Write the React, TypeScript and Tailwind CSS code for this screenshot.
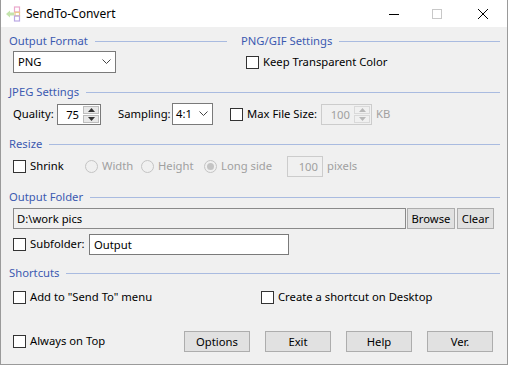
import React from 'react';

const font = { fontFamily: '"Noto Sans", "Liberation Sans", sans-serif' };

function Header({ label, className = '' }: { label: string; className?: string }) {
  return (
    <div className={`flex items-center h-4 ${className}`}>
      <span className="text-[#3c5ab0] leading-4 whitespace-nowrap">{label}</span>
      <div className="flex-1 h-px bg-[#a9bbe0] ml-[7px]" />
    </div>
  );
}

function Check({ label, className = '' }: { label: string; className?: string }) {
  return (
    <label className={`flex items-center h-4 shrink-0 ${className}`}>
      <span className="w-[13px] h-[13px] border border-[#333333] bg-white mr-[4px] shrink-0" />
      <span className="whitespace-nowrap">{label}</span>
    </label>
  );
}

function Radio({ label, checked = false, className = '' }: { label: string; checked?: boolean; className?: string }) {
  return (
    <label className={`flex items-center h-4 shrink-0 text-[#a0a0a0] ${className}`}>
      <span className="w-[13px] h-[13px] rounded-full border border-[#c4c4c4] bg-[#f0f0f0] mr-[4px] shrink-0 flex items-center justify-center">
        {checked && <span className="w-[7px] h-[7px] rounded-full bg-[#c4c4c4]" />}
      </span>
      <span className="whitespace-nowrap">{label}</span>
    </label>
  );
}

function Chevron() {
  return (
    <svg width="9" height="6" viewBox="0 0 9 6" className="shrink-0">
      <path d="M0.5 0.5 L4.5 4.5 L8.5 0.5" fill="none" stroke="#444" strokeWidth="1" />
    </svg>
  );
}

function Spin({ value, disabled = false, className = '' }: { value: string; disabled?: boolean; className?: string }) {
  const c = disabled ? '#b8b8b8' : '#333';
  const btn = disabled ? 'bg-[#f0f0f0] border border-[#d9d9d9]' : 'bg-[#e8e8e8] border border-[#bdbdbd]';
  return (
    <div
      className={`flex shrink-0 h-[21px] border ${disabled ? 'border-[#cccccc] bg-[#f0f0f0] text-[#a0a0a0]' : 'border-[#7a7a7a] bg-white'} ${className}`}
    >
      <span className="flex-1 text-right pr-[4px] leading-[19px]">{value}</span>
      <div className="w-[16px] flex flex-col my-px mr-px gap-px">
        <div className={`flex-1 flex items-center justify-center ${btn}`}>
          <svg width="7" height="4" viewBox="0 0 7 4">
            <path d="M0 4 L3.5 0 L7 4 Z" fill={c} />
          </svg>
        </div>
        <div className={`flex-1 flex items-center justify-center ${btn}`}>
          <svg width="7" height="4" viewBox="0 0 7 4">
            <path d="M0 0 L3.5 4 L7 0 Z" fill={c} />
          </svg>
        </div>
      </div>
    </div>
  );
}

function Btn({ label, className = '' }: { label: string; className?: string }) {
  return (
    <button className={`h-[21px] shrink-0 bg-[#e1e1e1] border border-[#adadad] leading-[19px] text-center ${className}`}>{label}</button>
  );
}

export default function App() {
  return (
    <div className="w-[508px] h-[365px] bg-[#f0f0f0] border border-[#9a9a9a] border-t-0 text-[11.25px] text-black overflow-hidden" style={font}>
      {/* title bar */}
      <div className="h-[27px] bg-white flex items-center text-[12px]">
        <svg width="16" height="16" viewBox="0 0 16 16" className="ml-[4px] mt-[1px]">
          <path d="M1 8 L5 4.5 L5 6.5 L9 6.5 L9 9.5 L5 9.5 L5 11.5 Z" fill="#c4e4ad" />
          <rect x="9.5" y="1" width="5" height="5" fill="none" stroke="#eaa8cc" strokeWidth="1.2" />
          <rect x="10" y="6.3" width="4.5" height="3.5" fill="none" stroke="#ebc888" strokeWidth="1.2" />
          <rect x="9.5" y="10" width="5" height="5" fill="none" stroke="#bba8e4" strokeWidth="1.2" />
        </svg>
        <span className="ml-[5px]">SendTo-Convert</span>
        <div className="flex-1" />
        <svg width="10" height="10" viewBox="0 0 10 10" className="mr-[33px]">
          <path d="M0 5.5 H10" stroke="#000" strokeWidth="1" />
        </svg>
        <svg width="10" height="10" viewBox="0 0 10 10" className="mr-[36px]">
          <rect x="0.5" y="0.5" width="9" height="9" fill="none" stroke="#c8c8c8" strokeWidth="1" />
        </svg>
        <svg width="10" height="10" viewBox="0 0 10 10" className="mr-[19px]">
          <path d="M0 0 L10 10 M10 0 L0 10" stroke="#000" strokeWidth="1" />
        </svg>
      </div>

      <div className="pl-[8px] pr-[7px]">
        {/* output format + png */}
        <div className="flex mt-[6px]">
          <Header label="Output Format" className="w-[218px]" />
          <Header label="PNG/GIF Settings" className="flex-1 ml-[14px]" />
        </div>
        <div className="flex mt-[2px] h-[22px]">
          <div className="ml-[4px] w-[103px] h-[22px] border border-[#7a7a7a] bg-white flex items-center px-[4px]">
            <span className="flex-1">PNG</span>
            <Chevron />
          </div>
          <Check label="Keep Transparent Color" className="ml-[130px] mt-[3px]" />
        </div>

        {/* jpeg */}
        <Header label="JPEG Settings" className="mt-[11px]" />
        <div className="flex items-center mt-[3px] h-[22px] pl-[4px]">
          <span className="w-[44px] shrink-0">Quality:</span>
          <Spin value="75" className="w-[44px]" />
          <span className="ml-[17px] w-[54px] shrink-0">Sampling:</span>
          <div className="w-[41px] h-[22px] shrink-0 border border-[#7a7a7a] bg-white flex items-center pl-[3px] pr-[4px]">
            <span className="flex-1">4:1</span>
            <Chevron />
          </div>
          <Check label="Max File Size:" className="ml-[17px] w-[91px]" />
          <Spin value="100" disabled className="w-[51px]" />
          <span className="ml-[4px] text-[#a0a0a0]">KB</span>
        </div>

        {/* resize */}
        <Header label="Resize" className="mt-[11px]" />
        <div className="flex items-center mt-[4px] h-[21px] pl-[4px]">
          <Check label="Shrink" className="w-[72px]" />
          <Radio label="Width" className="w-[56px]" />
          <Radio label="Height" className="w-[63px]" />
          <Radio label="Long side" checked className="w-[83px]" />
          <div className="w-[36px] h-[21px] shrink-0 border border-[#cccccc] text-[#a0a0a0] text-right pr-[4px] leading-[19px]">100</div>
          <span className="ml-[4px] text-[#a0a0a0]">pixels</span>
        </div>

        {/* output folder */}
        <Header label="Output Folder" className="mt-[12px]" />
        <div className="flex mt-[3px] pl-[4px] h-[21px]">
          <div className="w-[393px] h-[21px] shrink-0 border border-[#8a8a8a] bg-[#f0f0f0] pl-[3px] leading-[19px]">D:\work pics</div>
          <Btn label="Browse" className="ml-[1px] w-[48px]" />
          <Btn label="Clear" className="ml-[2px] w-[37px]" />
        </div>
        <div className="flex items-center mt-[5px] pl-[4px] h-[21px]">
          <Check label="Subfolder:" className="w-[76px]" />
          <div className="w-[200px] h-[21px] shrink-0 border border-[#7a7a7a] bg-white pl-[4px] leading-[19px]">Output</div>
        </div>

        {/* shortcuts */}
        <Header label="Shortcuts" className="mt-[10px]" />
        <div className="flex mt-[8px] pl-[4px]">
          <Check label={'Add to "Send To" menu'} className="w-[248px]" />
          <Check label="Create a shortcut on Desktop" />
        </div>

        <div className="flex items-center mt-[26px] pl-[4px] h-[21px]">
          <Check label="Always on Top" className="w-[171px]" />
          <Btn label="Options" className="w-[66px]" />
          <Btn label="Exit" className="ml-[15px] w-[66px]" />
          <Btn label="Help" className="ml-[15px] w-[66px]" />
          <Btn label="Ver." className="ml-[15px] w-[66px]" />
        </div>
      </div>
    </div>
  );
}
